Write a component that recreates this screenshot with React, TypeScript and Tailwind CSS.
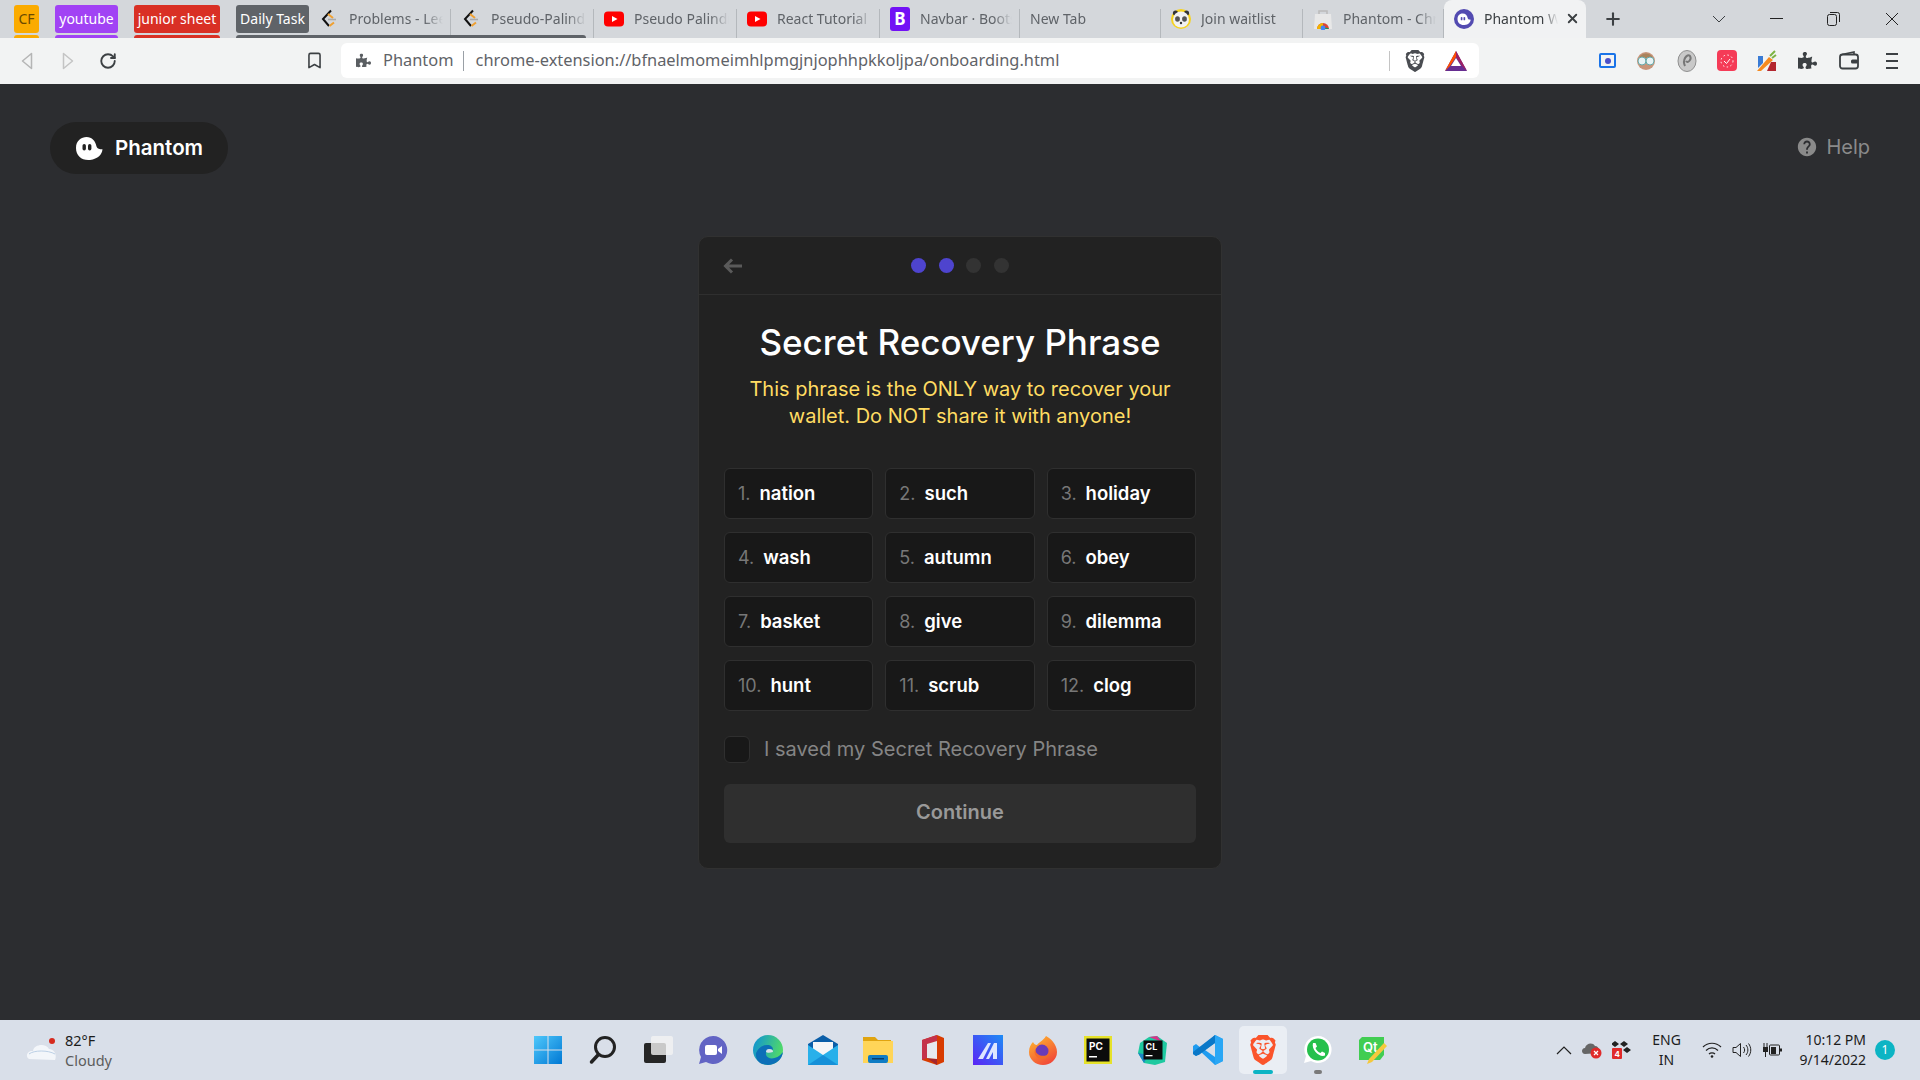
import type { ReactNode } from "react";
import { Bookmark, Plus, RotateCw, X } from "lucide-react";
import { FaPuzzlePiece } from "react-icons/fa";
import { MdHelp } from "react-icons/md";
import { SiBrave } from "react-icons/si";

const words = ["nation", "such", "holiday", "wash", "autumn", "obey", "basket", "give", "dilemma", "hunt", "scrub", "clog"];

function Ghost({ size, bg = "#ffffff", eye = "#222222" }: { size: number; bg?: string; eye?: string }) {
  return (
    <svg width={size} height={size} viewBox="0 0 28 28">
      <path d="M1 14C1 6.500 6.500 3 11.500 3C17 3 20.500 7 21.500 12.500C22.300 14.800 24.500 15.300 27.500 15.300C27 20.500 23 25 15 26C7 26.800 1 22 1 14Z" fill={bg} />
      <rect x="7.500" y="10" width="3.400" height="6.500" rx="1.700" fill={eye} />
      <rect x="13" y="10" width="3.400" height="6.500" rx="1.700" fill={eye} />
    </svg>
  );
}

function LeetIcon() {
  return (
    <svg width="20" height="20" viewBox="0 0 20 20" fill="none">
      <path d="M12 1.500L4 10L10 17" stroke="#111" strokeWidth="2" />
      <path d="M9 5L14 9" stroke="#f0a030" strokeWidth="2" />
      <path d="M10.500 17L15 13.500" stroke="#f0a030" strokeWidth="2" />
      <path d="M9 10.500H17" stroke="#aaa" strokeWidth="1.600" />
    </svg>
  );
}

function YtIcon() {
  return (
    <svg width="20" height="20" viewBox="0 0 20 20">
      <rect y="2.500" width="20" height="15" rx="4" fill="#f00" />
      <path d="M8 7L13.500 10L8 13Z" fill="#fff" />
    </svg>
  );
}

function BootstrapIcon() {
  return (
    <div className="flex h-[24px] w-[20px] items-center justify-center rounded-[3px] bg-[#7211f5] text-[17px] font-bold text-white">B</div>
  );
}

function PandaIcon() {
  return (
    <svg width="20" height="22" viewBox="0 0 20 22">
      <circle cx="10" cy="11" r="10" fill="#f6d21e" />
      <circle cx="4.500" cy="5" r="2.600" fill="#333" />
      <circle cx="15.500" cy="5" r="2.600" fill="#333" />
      <circle cx="10" cy="11.500" r="8" fill="#f1f1f1" />
      <ellipse cx="6.500" cy="11" rx="2.400" ry="2.800" fill="#555" />
      <ellipse cx="13.500" cy="11" rx="2.400" ry="2.800" fill="#555" />
      <circle cx="10" cy="15" r="1.200" fill="#333" />
    </svg>
  );
}

function StoreIcon() {
  return (
    <svg width="20" height="22" viewBox="0 0 20 22">
      <path d="M2 6H18L19 21H1Z" fill="#e8e8e8" />
      <path d="M6 6V3H14V6" stroke="#bbb" strokeWidth="1.500" fill="none" />
      <path d="M4 21A6 6 0 0 1 16 21Z" fill="#db4437" />
      <path d="M4 21A6 6 0 0 1 10 15V21Z" fill="#f4b400" />
      <path d="M10 21A4 4 0 0 1 16 21Z" fill="#0f9d58" />
      <circle cx="10" cy="20" r="2.400" fill="#4285f4" />
    </svg>
  );
}

function PhantomTabIcon() {
  return (
    <div className="flex h-[20px] w-[20px] items-center justify-center rounded-full bg-[#534bb1]">
      <Ghost size={14} eye="#534bb1" />
    </div>
  );
}

// titles are cut to what the tab strip actually shows
const groupTabs: { icon?: ReactNode; title: string; w: string }[] = [
  { icon: <LeetIcon />, title: "Problems - Lee", w: "w-[142px]" },
  { icon: <LeetIcon />, title: "Pseudo-Palind", w: "w-[143px]" },
];

const looseTabs: { icon?: ReactNode; title: string; w: string }[] = [
  { icon: <YtIcon />, title: "Pseudo Palindr", w: "w-[143px]" },
  { icon: <YtIcon />, title: "React Tutorial i", w: "w-[143px]" },
  { icon: <BootstrapIcon />, title: "Navbar · Boots", w: "w-[140px]" },
  { title: "New Tab", w: "w-[141px]" },
  { icon: <PandaIcon />, title: "Join waitlist", w: "w-[142px]" },
  { icon: <StoreIcon />, title: "Phantom - Chr", w: "w-[141px]" },
];

function Tab({ icon, title, w }: { icon?: ReactNode; title: string; w: string }) {
  return (
    <div className={`mt-[9px] flex h-[29px] shrink-0 items-center gap-[10px] border-r border-[#b4b8bc] pb-[10px] pl-[10px] pr-[7px] ${w}`}>
      {icon && <div className="flex w-[20px] shrink-0 justify-center">{icon}</div>}
      <span className="min-w-0 flex-1 overflow-hidden whitespace-nowrap text-[14px] text-[#5f6368] [mask-image:linear-gradient(to_right,black_80%,transparent)]">
        {title}
      </span>
    </div>
  );
}

function GroupChip({ label, color, text = "text-white", className = "" }: { label: string; color: string; text?: string; className?: string }) {
  return (
    <div className={`flex shrink-0 flex-col ${className}`}>
      <div className={`mt-[5px] flex h-[28px] items-center justify-center rounded-[3px] whitespace-nowrap pb-[1px] text-[14px] ${color} ${text}`}>{label}</div>
      <div className={`mt-[2px] h-[3px] rounded-t-[3px] ${color}`} />
    </div>
  );
}

function TabStrip() {
  return (
    <div className="flex h-[38px] items-start bg-[#d4d7db] pl-[14px]">
      <GroupChip label="CF" color="bg-[#fbab00]" text="text-[#6b4a00]" className="w-[25px]" />
      <GroupChip label="youtube" color="bg-[#a142f4]" className="ml-[16px] w-[63px]" />
      <GroupChip label="junior sheet" color="bg-[#d93025]" className="ml-[16px] w-[86px]" />
      <div className="ml-[16px] flex w-[358px] shrink-0 flex-col">
        <div className="flex h-[35px]">
          <div className="mt-[5px] flex h-[28px] w-[73px] shrink-0 items-center justify-center rounded-[3px] bg-[#5f6368] pb-[1px] text-[14px] whitespace-nowrap text-white">Daily Task</div>
          {groupTabs.map((t) => (
            <Tab key={t.title} icon={t.icon} title={t.title} w={t.w} />
          ))}
        </div>
        <div className="mr-[8px] h-[3px] rounded-t-[3px] bg-[#5f6368]" />
      </div>
      {looseTabs.map((t) => (
        <Tab key={t.title} icon={t.icon} title={t.title} w={t.w} />
      ))}
      <div className="flex h-[38px] w-[142px] shrink-0 items-center gap-[10px] rounded-t-[8px] bg-[#f1f2f3] pb-[1px] pl-[10px]">
        <PhantomTabIcon />
        <span className="w-[74px] overflow-hidden whitespace-nowrap text-[14px] text-[#3c4043] [mask-image:linear-gradient(to_right,black_80%,transparent)]">Phantom W</span>
        <X size={15} strokeWidth={3} className="-ml-[3px] text-[#3c4043]" />
      </div>
      <Plus size={20} strokeWidth={2.5} className="ml-[17px] mt-[9px] text-[#3c4043]" />
      <svg width="14" height="8" viewBox="0 0 14 8" fill="none" className="ml-[89px] mt-[15px]">
        <path d="M1 1L7 7L13 1" stroke="#3c4043" strokeWidth="1" />
      </svg>
      <div className="ml-[44px] mt-[18px] h-px w-[13px] bg-[#222]" />
      <svg width="13" height="14" viewBox="0 0 13 14" fill="none" className="ml-[44px] mt-[12px]">
        <rect x="0.500" y="2.500" width="9" height="11" rx="2" stroke="#222" />
        <path d="M3 0.500H10.500A2 2 0 0 1 12.500 2.500V10" stroke="#222" />
      </svg>
      <svg width="14" height="14" viewBox="0 0 14 14" fill="none" className="ml-[45px] mt-[12px]">
        <path d="M1 1L13 13M13 1L1 13" stroke="#222" />
      </svg>
    </div>
  );
}

function Toolbar() {
  return (
    <div className="flex h-[46px] items-start bg-[#f2f3f3] pl-[21px]">
      <svg width="12" height="18" viewBox="0 0 12 18" fill="none" className="mt-[14px]">
        <path d="M10.500 1.500V16.500L1.500 9Z" stroke="#b5b5b5" strokeWidth="1.500" strokeLinejoin="round" />
      </svg>
      <svg width="12" height="18" viewBox="0 0 12 18" fill="none" className="ml-[29px] mt-[14px]">
        <path d="M1.500 1.500V16.500L10.500 9Z" stroke="#c4c4c4" strokeWidth="1.500" strokeLinejoin="round" />
      </svg>
      <RotateCw size={18} strokeWidth={2.5} className="ml-[25px] mt-[14px] text-[#3c4043]" />
      <Bookmark size={19} strokeWidth={2} className="ml-[188px] mt-[13px] text-[#3c4043]" />
      <div className="ml-[17px] mt-[5px] flex h-[35px] w-[1138px] shrink-0 items-center rounded-[6px] bg-white pl-[15px] text-[16.400px] text-[#5f6368]">
        <FaPuzzlePiece size={15} className="text-[#5a5e62]" />
        <span className="ml-[12px]">Phantom</span>
        <div className="ml-[9px] h-[20px] w-px bg-[#9aa0a6]" />
        <span className="ml-[12px] w-[913px]">chrome-extension://bfnaelmomeimhlpmgjnjophhpkkoljpa/onboarding.html</span>
        <div className="h-[20px] w-px bg-[#c4c4c4]" />
        <SiBrave size={22} className="ml-[14px] text-[#4a4d52]" />
        <svg width="22" height="20" viewBox="0 0 22 20" className="ml-[19px]">
          <path d="M11 0L22 20H0Z" fill="#662d91" />
          <path d="M11 0L0 20L5 15L11 6Z" fill="#ff5000" />
          <path d="M11 0L22 20L17 15L11 6Z" fill="#9e1f63" />
          <path d="M11 7L16 15H6Z" fill="#fff" />
        </svg>
      </div>
      <div className="ml-[120px] mt-[15px] flex h-[15px] w-[17px] items-center justify-center rounded-[2px] border-2 border-[#1a73e8]">
        <div className="h-[6px] w-[6px] rounded-full bg-[#4b50c8]" />
      </div>
      <svg width="20" height="20" viewBox="0 0 20 20" className="ml-[20px] mt-[13px]">
        <circle cx="10" cy="10" r="9" fill="#c8957a" />
        <path d="M3 7C5 1 15 1 17 7Z" fill="#a9835c" />
        <circle cx="6" cy="10" r="4" fill="#e8f3f5" stroke="#6aa" />
        <circle cx="14" cy="10" r="4" fill="#e8f3f5" stroke="#6aa" />
      </svg>
      <svg width="20" height="22" viewBox="0 0 20 22" fill="none" className="ml-[21px] mt-[12px]">
        <ellipse cx="10" cy="11" rx="9" ry="10.500" fill="#c9c9c9" stroke="#8f8f8f" />
        <path d="M8 16C5 10 10 3 13 6C15 9 11 14 9 11" stroke="#777" strokeWidth="2" />
      </svg>
      <div className="ml-[20px] mt-[12px] flex h-[21px] w-[20px] items-center justify-center rounded-[4px] bg-[#f53b57]">
        <svg width="14" height="14" viewBox="0 0 14 14" fill="none">
          <circle cx="7" cy="7" r="6" stroke="#fff" strokeDasharray="1.500 2.500" />
          <path d="M4 7L6.500 9.500L10 5" stroke="#fff" />
        </svg>
      </div>
      <svg width="21" height="22" viewBox="0 0 21 22" className="ml-[19px] mt-[12px]">
        <path d="M13 7L17 10L5 21L1 21Z" fill="#f58a1f" />
        <path d="M2 6H7V13L2 18Z" fill="#3a7bd5" />
        <path d="M15 12H20V21H11Z" fill="#b3262e" />
        <path d="M14 6L19 1M16 8L20 5" stroke="#7cb342" strokeWidth="2" />
      </svg>
      <FaPuzzlePiece size={19} className="ml-[21px] mt-[13px] text-[#3c4043]" />
      <svg width="20" height="19" viewBox="0 0 20 19" fill="none" className="ml-[22px] mt-[13px]">
        <path d="M3 3.500L15 1V4" stroke="#3c4043" strokeWidth="1.600" />
        <rect x="1" y="3.500" width="18" height="14" rx="2.500" stroke="#3c4043" strokeWidth="1.800" />
        <rect x="12" y="8.500" width="7" height="4" rx="1.500" fill="#3c4043" />
      </svg>
      <div className="ml-[27px] mt-[15px] flex w-[12px] flex-col gap-[5px]">
        <div className="h-[2px] bg-[#3c4043]" />
        <div className="h-[2px] bg-[#3c4043]" />
        <div className="h-[2px] bg-[#3c4043]" />
      </div>
    </div>
  );
}

function WordCell({ n, word }: { n: number; word: string }) {
  return (
    <div className="flex h-[51px] items-center gap-[9px] rounded-[6px] border border-[#2f2f2f] bg-[#181818] pl-[13px] text-[18.500px]">
      <span className="text-[18px] text-[#777777]">{n}.</span>
      <span className="font-semibold text-white">{word}</span>
    </div>
  );
}

function Card() {
  return (
    <div className="ml-[698px] mt-[62px] w-[524px] rounded-[10px] border border-[#313131] bg-[#222222] [font-family:Inter,sans-serif]">
      <div className="relative flex h-[58px] items-center justify-center gap-[12.500px] border-b border-[#2f2f2f]">
        <svg width="20" height="16" viewBox="0 0 20 16" fill="none" className="absolute left-[24px] top-[21px]">
          <path d="M19 8H3M9 1.500L2.500 8L9 14.500" stroke="#5a5a5a" strokeWidth="3" />
        </svg>
        <div className="h-[15px] w-[15px] rounded-full bg-[#4e44ce]" />
        <div className="h-[15px] w-[15px] rounded-full bg-[#4e44ce]" />
        <div className="h-[15px] w-[15px] rounded-full bg-[#333333]" />
        <div className="h-[15px] w-[15px] rounded-full bg-[#333333]" />
      </div>
      <div className="px-[25px] pb-[25px] pt-[25px]">
        <h1 className="text-center text-[35px] leading-[44px] font-medium text-white">Secret Recovery Phrase</h1>
        <p className="mx-auto mt-[12px] w-[440px] text-center text-[20px] leading-[27px] text-[#ffdc62]">
          This phrase is the ONLY way to recover your wallet. Do NOT share it with anyone!
        </p>
        <div className="mt-[38px] grid grid-cols-3 gap-x-[12px] gap-y-[13px]">
          {words.map((w, i) => (
            <WordCell key={w} n={i + 1} word={w} />
          ))}
        </div>
        <div className="mt-[25px] flex items-center gap-[14px]">
          <div className="h-[27px] w-[26px] rounded-[6px] border border-[#2f2f2f] bg-[#181818]" />
          <span className="text-[20px] leading-[27px] text-[#858585]">I saved my Secret Recovery Phrase</span>
        </div>
        <div className="mt-[21px] flex h-[59px] items-center justify-center rounded-[6px] bg-[#2f2f2f] pb-[3px] text-[20px] font-semibold text-[#999999]">
          Continue
        </div>
      </div>
    </div>
  );
}

function Page() {
  return (
    <main className="h-[936px] bg-[#2c2d30] [font-family:Inter,sans-serif]">
      <div className="flex items-start justify-between px-[50px] pt-[38px]">
        <div className="flex h-[52px] w-[178px] items-center gap-[12px] rounded-full bg-[#222222] pl-[25px] text-[20.500px] font-semibold text-white">
          <Ghost size={28} />
          Phantom
        </div>
        <div className="flex items-center gap-[8px] pt-[10px] text-[20px] text-[#8a8a8a]">
          <MdHelp size={22} />
          Help
        </div>
      </div>
      <Card />
    </main>
  );
}

const taskIcons: { key: string; node: ReactNode }[] = [
  {
    key: "start",
    node: (
      <svg width="30" height="30" viewBox="0 0 30 30">
        <defs>
          <linearGradient id="win" x1="0" y1="0" x2="1" y2="1">
            <stop offset="0" stopColor="#4fc8fb" />
            <stop offset="1" stopColor="#0078d4" />
          </linearGradient>
        </defs>
        <path d="M1 1H14.500V14.500H1ZM15.500 1H29V14.500H15.500ZM1 15.500H14.500V29H1ZM15.500 15.500H29V29H15.500Z" fill="url(#win)" />
      </svg>
    ),
  },
  {
    key: "search",
    node: (
      <svg width="30" height="30" viewBox="0 0 30 30" fill="none">
        <circle cx="17" cy="12" r="9.500" stroke="#222" strokeWidth="3" />
        <path d="M10 20L3.500 27" stroke="#222" strokeWidth="3.500" strokeLinecap="round" />
      </svg>
    ),
  },
  {
    key: "taskview",
    node: (
      <svg width="30" height="30" viewBox="0 0 30 30">
        <rect x="1" y="8" width="22" height="20" rx="2" fill="#262626" />
        <rect x="8" y="1" width="22" height="19" rx="2" fill="#f2f2f2" fillOpacity="0.8" />
      </svg>
    ),
  },
  {
    key: "chat",
    node: (
      <svg width="30" height="30" viewBox="0 0 30 30">
        <path d="M15 1A14 14 0 1 1 8 27L1 29L3 22A14 14 0 0 1 15 1Z" fill="#6264c4" />
        <rect x="7" y="10" width="12" height="10" rx="2" fill="#fff" />
        <path d="M20 14L24 11V19L20 16Z" fill="#fff" />
      </svg>
    ),
  },
  {
    key: "edge",
    node: (
      <svg width="30" height="30" viewBox="0 0 30 30">
        <defs>
          <linearGradient id="edge" x1="0" y1="0" x2="1" y2="0.300">
            <stop offset="0" stopColor="#0c8fd8" />
            <stop offset="1" stopColor="#4fd86b" />
          </linearGradient>
        </defs>
        <circle cx="15" cy="15" r="15" fill="url(#edge)" />
        <path d="M30 17C29 25 22 30 15 30C7 30 2 25 3 18C5 13 9 10 14 10C18 10 20 12 20 15C16 13 12 16 13 20C15 25 24 25 30 17Z" fill="#0c6fb8" />
        <path d="M16 14C19 14 20 15 20 17C17 18 14 18 13 17C13 15 14 14 16 14Z" fill="#d8e0ea" />
      </svg>
    ),
  },
  {
    key: "mail",
    node: (
      <svg width="30" height="30" viewBox="0 0 30 30">
        <path d="M15 0L30 9V30H0V9Z" fill="#0a5ea8" />
        <path d="M5 7H25V16L15 21L5 16Z" fill="#f4f6f8" />
        <path d="M0 10L15 20L30 10V30H0Z" fill="#28b0ea" />
        <path d="M0 30L15 20L30 30Z" fill="#1590d8" />
      </svg>
    ),
  },
  {
    key: "files",
    node: (
      <svg width="30" height="30" viewBox="0 0 30 30">
        <path d="M0 2H12L15 5H28V28H0Z" fill="#e0a410" />
        <path d="M0 6H30V28H0Z" fill="#ffd558" />
        <rect x="5" y="20" width="20" height="8" rx="2" fill="#0f7cc4" />
        <rect x="9" y="23" width="12" height="1.500" fill="#083d6b" />
      </svg>
    ),
  },
  {
    key: "office",
    node: (
      <svg width="30" height="30" viewBox="0 0 30 30">
        <path d="M19 0L26 3V27L19 30L4 25V5Z" fill="#d83b01" />
        <path d="M19 0L4 5V25L9 23V9L19 6Z" fill="#c4314b" />
        <path d="M9 23L19 30V24Z" fill="#a4262c" />
        <path d="M9 9L19 6V24L9 23Z" fill="#e6e8ee" />
      </svg>
    ),
  },
  {
    key: "sublime",
    node: (
      <svg width="30" height="30" viewBox="0 0 30 30">
        <defs>
          <linearGradient id="vs" x1="0" y1="1" x2="1" y2="0">
            <stop offset="0" stopColor="#5b24f5" />
            <stop offset="1" stopColor="#1e8cf5" />
          </linearGradient>
        </defs>
        <rect width="30" height="30" fill="url(#vs)" />
        <path d="M5 24L15 8H18L10 24ZM13 24L21 8H24V24H20V17L16 24Z" fill="#dfe6ff" />
      </svg>
    ),
  },
  {
    key: "firefox",
    node: (
      <svg width="30" height="30" viewBox="0 0 30 30">
        <defs>
          <linearGradient id="ff" x1="0.200" y1="0" x2="0.800" y2="1">
            <stop offset="0" stopColor="#ffb32c" />
            <stop offset="1" stopColor="#f0413a" />
          </linearGradient>
        </defs>
        <path d="M18 1C22 3 29 9 29 17A14 13 0 0 1 1 17C1 12 3 9 5 7C6 9 7 10 9 10C11 7 15 6 18 1Z" fill="url(#ff)" />
        <circle cx="14" cy="16" r="6.500" fill="#6a3bb8" />
        <path d="M7 15C9 21 16 23 22 18C21 24 13 26 9 22C7 20 6 18 7 15Z" fill="#f26b2a" />
      </svg>
    ),
  },
  {
    key: "pycharm",
    node: (
      <svg width="28" height="28" viewBox="0 0 28 28">
        <rect width="28" height="28" fill="#e6e22a" />
        <rect x="2.500" y="2.500" width="23" height="23" fill="#0c0c0c" />
        <text x="5" y="14" fontFamily="Inter, sans-serif" fontSize="10" fontWeight="700" fill="#fff">PC</text>
        <rect x="5" y="20" width="8" height="1.500" fill="#fff" />
      </svg>
    ),
  },
  {
    key: "clion",
    node: (
      <svg width="30" height="30" viewBox="0 0 30 30">
        <path d="M2 8L11 2L19 1L29 8L27 27L17 30L6 28L0 18Z" fill="#1ec9a0" />
        <path d="M11 2L19 1L24 7Z" fill="#d8338a" />
        <path d="M0 18L6 28L10 20Z" fill="#1b85c4" />
        <rect x="5.500" y="5.500" width="19" height="19" fill="#0c0c0c" />
        <text x="7.500" y="15" fontFamily="Inter, sans-serif" fontSize="9" fontWeight="700" fill="#fff">CL</text>
        <rect x="7.500" y="20" width="7" height="1.300" fill="#fff" />
      </svg>
    ),
  },
  {
    key: "vscode",
    node: (
      <svg width="30" height="30" viewBox="0 0 30 30">
        <path d="M22 0L30 4V26L22 30L8 17L3 21L0 19V11L3 9L8 13Z" fill="#1f9cf0" />
        <path d="M22 8V22L12 15Z" fill="#d8dfe9" />
        <path d="M22 0L30 4V26L22 30Z" fill="#2aa7f5" />
        <path d="M22 0V8L6.500 19.500L3 21L0 19V17Z" fill="#0a78c8" />
      </svg>
    ),
  },
  {
    key: "brave",
    node: <SiBrave size={30} className="text-[#fb542b]" />,
  },
  {
    key: "whatsapp",
    node: (
      <svg width="30" height="30" viewBox="0 0 30 30">
        <path d="M15 1A13.500 13.500 0 1 1 8 26L1 28L3 21A13.500 13.500 0 0 1 15 1Z" fill="#fff" />
        <circle cx="15" cy="14.500" r="11" fill="#25c04c" />
        <path d="M10 8L12.500 8L14 11.500L12.500 13C13.500 15.500 15 17 17.500 18L19 16.500L22 18V20.500C17 23 8 15 10 8Z" fill="#fff" />
      </svg>
    ),
  },
  {
    key: "qt",
    node: (
      <svg width="30" height="30" viewBox="0 0 30 30">
        <path d="M4 2H26V20L22 25H1V5Z" fill="#41cd52" />
        <text x="5" y="17" fontFamily="Inter, sans-serif" fontSize="13" fontWeight="600" fill="#fff">Qt</text>
        <path d="M26 8L29 11L14 27L9 29L11 24Z" fill="#f5c93d" />
      </svg>
    ),
  },
];

function TaskbarButton({ id, children }: { id: string; children: ReactNode }) {
  const active = id === "brave";
  return (
    <div className={`relative flex h-[48px] w-[48px] items-center justify-center rounded-[5px] ${active ? "bg-[#eaeef4]" : ""}`}>
      {children}
      {active && <div className="absolute bottom-0 left-[14px] h-[4px] w-[20px] rounded-full bg-[#0cb4c4]" />}
      {id === "whatsapp" && <div className="absolute bottom-0 left-[20px] h-[4px] w-[8px] rounded-full bg-[#7a7a7a]" />}
    </div>
  );
}

function Taskbar() {
  return (
    <footer className="grid h-[60px] grid-cols-[1fr_auto_1fr] items-center bg-[#d9dfe9] text-[#1c1c1c] [font-family:'Noto_Sans',sans-serif]">
      <div className="flex items-center pl-[26px]">
        <svg width="32" height="28" viewBox="0 0 32 28">
          <circle cx="26" cy="5" r="3" fill="#d62a1e" />
          <path d="M3 23C-1 21 1 14 7 15C8 8 20 7 23 13C29 13 31 20 29 24Z" fill="#f3f6fa" />
          <path d="M3 18C8 14 22 14 29 18" stroke="#bcd0e6" fill="none" />
        </svg>
        <div className="ml-[7px] flex flex-col text-[14.500px] leading-[20px]">
          <span>82°F</span>
          <span className="text-[#5c5c5c]">Cloudy</span>
        </div>
      </div>
      <div className="flex gap-[7px]">
        {taskIcons.map((t) => (
          <TaskbarButton key={t.key} id={t.key}>
            {t.node}
          </TaskbarButton>
        ))}
      </div>
      <div className="flex items-center justify-end pr-[25px]">
        <svg width="16" height="9" viewBox="0 0 16 9" fill="none">
          <path d="M1 8L8 1L15 8" stroke="#222" strokeWidth="1.200" />
        </svg>
        <svg width="20" height="18" viewBox="0 0 20 18" className="ml-[10px]">
          <path d="M3 13C-1 13 -1 7 3 7C4 2 11 1 13 5C16 5 18 8 17 12Z" fill="#666" />
          <circle cx="14" cy="12" r="5.500" fill="#e02a2a" />
          <path d="M12 10L16 14M16 10L12 14" stroke="#fff" strokeWidth="1.200" />
        </svg>
        <svg width="20" height="20" viewBox="0 0 20 20" className="ml-[10px]">
          <rect y="8" width="10" height="11" rx="1" fill="#e02a2a" />
          <path d="M3 1L7 4L3 7L-1 4ZM12 1L16 4L12 7L8 4ZM15 7L19 10L15 13L11 10Z" fill="#222" />
          <text x="2.500" y="17" fontSize="8" fontWeight="700" fill="#fff" fontFamily="Inter, sans-serif">4</text>
        </svg>
        <div className="ml-[19px] w-[32px] text-center text-[14px] leading-[20px]">
          ENG
          <br />
          IN
        </div>
        <svg width="20" height="16" viewBox="0 0 20 16" fill="none" className="ml-[19px]">
          <path d="M1 5C6 0 14 0 19 5M4 8.500C7.500 5 12.500 5 16 8.500M7 12C8.500 10.500 11.500 10.500 13 12" stroke="#222" strokeWidth="1.200" />
          <circle cx="10" cy="14.500" r="1.300" fill="#222" />
        </svg>
        <svg width="20" height="16" viewBox="0 0 20 16" fill="none" className="ml-[10px]">
          <path d="M1 5.500H4L8.500 1.500V14.500L4 10.500H1Z" stroke="#222" />
          <path d="M11.500 5C13 7 13 9 11.500 11M14 3C16.500 6 16.500 10 14 13M16.500 1.500C19.500 5.500 19.500 10.500 16.500 14.500" stroke="#222" />
        </svg>
        <svg width="20" height="16" viewBox="0 0 20 16" className="ml-[10px]">
          <rect x="1" y="5" width="5" height="5" fill="#222" />
          <path d="M2 5V1M5 5V1M3.500 10V15" stroke="#222" />
          <rect x="7.500" y="3" width="10" height="10" rx="1" fill="none" stroke="#222" />
          <rect x="9" y="5" width="5" height="7" fill="#222" />
          <rect x="18" y="6.500" width="2" height="3" fill="#222" />
        </svg>
        <div className="ml-[18px] text-right text-[14px] leading-[20px]">
          10:12 PM
          <br />
          9/14/2022
        </div>
        <div className="ml-[9px] flex h-[20px] w-[20px] items-center justify-center rounded-full bg-[#0cb4c4] text-[12px] text-white">1</div>
      </div>
    </footer>
  );
}

export default function App() {
  return (
    <div className="h-[1080px] w-[1920px] overflow-hidden [font-family:'Noto_Sans',sans-serif]">
      <TabStrip />
      <Toolbar />
      <Page />
      <Taskbar />
    </div>
  );
}
